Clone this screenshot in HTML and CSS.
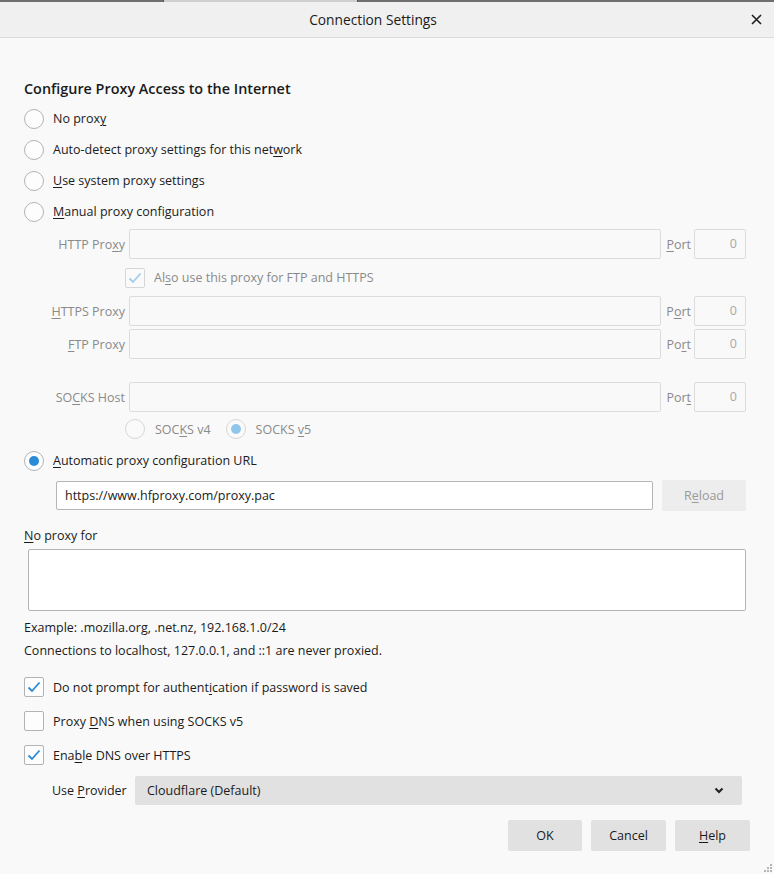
FILE: index.html
```html
<!DOCTYPE html>
<html lang="en">
<head>
<meta charset="utf-8">
<title>Connection Settings</title>
<link rel="stylesheet" href="styles.css">
</head>
<body>
<div class="topstrip"><div class="behind"></div></div>
<div class="titlebar">
  <div class="title">Connection Settings</div>
  <div class="close"><svg width="11" height="11" viewBox="0 0 11 11"><path d="M1 1 L10 10 M10 1 L1 10" stroke="#1f1f1f" stroke-width="1.6" fill="none"/></svg></div>
</div>
<div class="content">
  <h1 class="heading">Configure Proxy Access to the Internet</h1>

  <div class="radio-row"><span class="radio"></span><span>No prox<u>y</u></span></div>
  <div class="radio-row"><span class="radio"></span><span>Auto-detect proxy settings for this net<u>w</u>ork</span></div>
  <div class="radio-row"><span class="radio"></span><span><u>U</u>se system proxy settings</span></div>
  <div class="radio-row"><span class="radio"></span><span><u>M</u>anual proxy configuration</span></div>

  <div class="manual">
    <div class="prow">
      <span class="plabel">HTTP Pro<u>x</u>y</span>
      <div class="field"></div>
      <span class="portlabel"><u>P</u>ort</span>
      <div class="port">0</div>
    </div>
    <div class="also">
      <span class="check dis"><svg width="14" height="12" viewBox="0 0 14 12"><path d="M1.5 6.5 L5 10 L12.5 1.5" stroke="#9fcdee" stroke-width="1.8" fill="none"/></svg></span>
      <span class="dis-text">Al<u>s</u>o use this proxy for FTP and HTTPS</span>
    </div>
    <div class="prow">
      <span class="plabel"><u>H</u>TTPS Proxy</span>
      <div class="field"></div>
      <span class="portlabel">P<u>o</u>rt</span>
      <div class="port">0</div>
    </div>
    <div class="prow gap3">
      <span class="plabel"><u>F</u>TP Proxy</span>
      <div class="field"></div>
      <span class="portlabel">Po<u>r</u>t</span>
      <div class="port">0</div>
    </div>
    <div class="prow gap23">
      <span class="plabel">SO<u>C</u>KS Host</span>
      <div class="field"></div>
      <span class="portlabel">Por<u>t</u></span>
      <div class="port">0</div>
    </div>
    <div class="socks-row">
      <span class="radio dis"></span><span class="dis-text">SOC<u>K</u>S v4</span>
      <span class="radio dis sel v5"></span><span class="dis-text">SOCKS <u>v</u>5</span>
    </div>
  </div>

  <div class="radio-row auto"><span class="radio sel"></span><span><u>A</u>utomatic proxy configuration URL</span></div>
  <div class="url-row">
    <div class="url">https://www.hfproxy.com/proxy.pac</div>
    <div class="reload">R<u>e</u>load</div>
  </div>

  <div class="noproxy-label"><u>N</u>o proxy for</div>
  <div class="textarea"></div>
  <div class="note first">Example: .mozilla.org, .net.nz, 192.168.1.0/24</div>
  <div class="note">Connections to localhost, 127.0.0.1, and ::1 are never proxied.</div>

  <div class="check-row first">
    <span class="check"><svg width="14" height="12" viewBox="0 0 14 12"><path d="M1.5 6.5 L5 10 L12.5 1.5" stroke="#2a8ad6" stroke-width="1.8" fill="none"/></svg></span>
    <span>Do not prompt for authent<u>i</u>cation if password is saved</span>
  </div>
  <div class="check-row">
    <span class="check"></span>
    <span>Proxy <u>D</u>NS when using SOCKS v5</span>
  </div>
  <div class="check-row">
    <span class="check"><svg width="14" height="12" viewBox="0 0 14 12"><path d="M1.5 6.5 L5 10 L12.5 1.5" stroke="#2a8ad6" stroke-width="1.8" fill="none"/></svg></span>
    <span>Ena<u>b</u>le DNS over HTTPS</span>
  </div>

  <div class="provider-row">
    <span class="provider-label">Use <u>P</u>rovider</span>
    <div class="select">
      <span>Cloudflare (Default)</span>
      <svg width="10" height="7" viewBox="0 0 10 7"><path d="M1.5 1.5 L5 5 L8.5 1.5" stroke="#1f1f1f" stroke-width="2" fill="none"/></svg>
    </div>
  </div>

  <div class="buttons">
    <div class="btn">OK</div>
    <div class="btn">Cancel</div>
    <div class="btn"><u>H</u>elp</div>
  </div>
</div>
<svg class="grip" width="9" height="9" viewBox="0 0 9 9"><g fill="#b5b5b5"><rect x="7" y="1" width="2" height="2"/><rect x="4" y="4" width="2" height="2"/><rect x="7" y="4" width="2" height="2"/><rect x="1" y="7" width="2" height="2"/><rect x="4" y="7" width="2" height="2"/><rect x="7" y="7" width="2" height="2"/></g></svg>
</body>
</html>
```
FILE: styles.css
```css
* { box-sizing: border-box; }
html, body { margin: 0; }
body {
  width: 774px;
  height: 874px;
  overflow: hidden;
  background: #f9f9f9;
  color: #1b1b1b;
  font-family: "Open Sans", "Noto Sans", sans-serif;
  font-size: 12.5px;
  position: relative;
}
u { text-underline-offset: 2px; text-decoration-thickness: 1px; }

.topstrip { height: 2px; background: #6f6f6f; display: flex; }
.behind { margin-left: 163px; width: 195px; background: #cfcfcf; border-left: 1px solid #555; border-right: 1px solid #555; }

.titlebar {
  height: 36px;
  background: #f0f0f0;
  border-bottom: 1px solid #dcdcdc;
  display: flex;
  align-items: center;
}
.title { flex: 1; text-align: center; font-size: 13.75px; color: #1a1a1a; }
.close { width: 28px; display: flex; align-items: center; padding-left: 5px; }

.content { padding: 0 28px 0 24px; display: flex; flex-direction: column; }
.heading { margin: 41px 0 4px; font-size: 14.4px; font-weight: 600; line-height: 20px; color: #1a1a1a; }

.radio-row { height: 31px; display: flex; align-items: center; gap: 9px; }
.radio {
  width: 20px; height: 20px; border-radius: 50%;
  border: 1px solid #b3b3b3; background: #fdfdfd;
  display: inline-flex; align-items: center; justify-content: center; flex: none;
}
.radio.sel::after { content: ""; width: 10px; height: 10px; border-radius: 50%; background: #2a8ad6; }
.radio.dis { border-color: #d6d6d6; background: #fafafa; }
.radio.dis.sel::after { background: #90c6ea; }

.manual { margin-top: 2px; display: flex; flex-direction: column; color: #8a8a8a; }
.prow { height: 30px; display: flex; align-items: center; }
.prow.gap3 { margin-top: 3px; }
.prow.gap23 { margin-top: 23px; }
.plabel { width: 101px; text-align: right; margin-right: 4px; flex: none; }
.field { flex: 1; height: 30px; border: 1px solid #dcdcdc; border-radius: 2px; background: #f9f9f9; }
.portlabel { margin: 0 3px 0 5px; flex: none; }
.port {
  width: 52px; height: 30px; border: 1px solid #dcdcdc; border-radius: 2px; flex: none;
  text-align: right; padding-right: 8px; line-height: 28px; color: #a8a8a8;
}
.also { height: 37px; display: flex; align-items: center; padding-left: 101px; gap: 9px; }
.dis-text { color: #8a8a8a; }

.check {
  width: 20px; height: 20px; border: 1px solid #b3b3b3; border-radius: 2px; background: #fdfdfd;
  display: inline-flex; align-items: center; justify-content: center; flex: none;
}
.check.dis { border-color: #d6d6d6; background: #fafafa; }

.socks-row { height: 34px; display: flex; align-items: center; padding-left: 101px; }
.socks-row .dis-text { margin-left: 10px; }
.socks-row .v5 { margin-left: 15px; }

.radio-row.auto { height: 29px; }
.url-row { margin-top: 5px; height: 31px; display: flex; align-items: center; padding-left: 32px; gap: 9px; }
.url {
  flex: 1; height: 29px; border: 1px solid #b5b5b5; border-radius: 2px; background: #fff;
  padding-left: 8px; line-height: 27px; color: #1a1a1a;
}
.reload {
  width: 84px; height: 31px; border-radius: 2px; background: #ededed; color: #9a9a9a;
  text-align: center; line-height: 32px;
}

.noproxy-label { margin-top: 15px; line-height: 20px; }
.textarea { margin: 3px 0 0 4px; height: 62px; border: 1px solid #b5b5b5; border-radius: 2px; background: #fff; }
.note { line-height: 23px; }
.note.first { margin-top: 5px; }

.check-row { height: 34px; display: flex; align-items: center; gap: 9px; }
.check-row.first { margin-top: 8px; }

.provider-row { margin-top: 4px; display: flex; align-items: center; padding-left: 28px; margin-right: 4px; }
.provider-label { width: 83px; flex: none; }
.select {
  flex: 1; height: 29px; background: #e1e1e1; border-radius: 2px;
  display: flex; align-items: center; justify-content: space-between; padding: 0 18px 0 12px;
}

.buttons { margin-top: 15px; margin-right: -4px; display: flex; justify-content: flex-end; gap: 9px; }
.btn { width: 75px; height: 31px; border-radius: 2px; background: #e1e1e1; text-align: center; line-height: 31px; color: #1a1a1a; }
.btn:first-child { width: 74px; }

.grip { position: absolute; right: 2px; bottom: 2px; }
```
